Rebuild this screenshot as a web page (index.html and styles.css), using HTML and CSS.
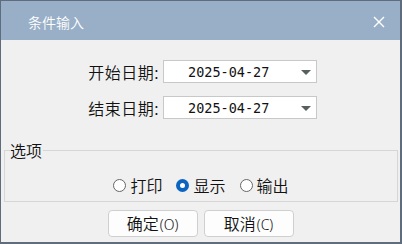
FILE: index.html
```html
<!DOCTYPE html>
<html lang="zh-CN">
<head>
    <meta charset="UTF-8">
    <title>条件输入</title>
    <link rel="stylesheet" href="styles.css">
</head>
<body>
<div class="dialog">
    <div class="titlebar">
        <span class="title">条件输入</span>
        <svg class="close" width="12" height="12" viewBox="0 0 12 12">
            <path d="M1 1 L11 11 M11 1 L1 11" stroke="#fff" stroke-width="1.4" fill="none"/>
        </svg>
    </div>
    <div class="content">
        <div class="dates">
            <label>开始日期:</label>
            <div class="datebox"><span>2025-04-27</span><i class="arrow"></i></div>
            <label>结束日期:</label>
            <div class="datebox"><span>2025-04-27</span><i class="arrow"></i></div>
        </div>
        <fieldset class="options">
            <legend>选项</legend>
            <div class="radios">
                <span class="radio"></span><span class="rlabel">打印</span>
                <span class="radio checked"></span><span class="rlabel">显示</span>
                <span class="radio"></span><span class="rlabel">输出</span>
            </div>
        </fieldset>
        <div class="actions">
            <button>确定<span class="key">(O)</span></button>
            <button>取消<span class="key">(C)</span></button>
        </div>
    </div>
</div>
</body>
</html>
```

FILE: styles.css
```css
* {
    margin: 0;
    padding: 0;
    box-sizing: border-box;
}

body {
    font-family: "Noto Sans CJK SC", "Noto Sans", sans-serif;
    font-weight: 350;
    background: #f0f0f0;
}

.dialog {
    width: 402px;
    height: 244px;
    border: 1px solid #5e6c7b;
    border-right-width: 2px;
    border-bottom-width: 2px;
    background: #f0f0f0;
    display: flex;
    flex-direction: column;
}

.titlebar {
    height: 39px;
    background: #99afc7;
    display: flex;
    align-items: center;
    justify-content: space-between;
    padding: 0 15px 0 27px;
}

.titlebar .title {
    color: #fff;
    font-size: 14px;
    line-height: 16px;
    margin-top: 2px;
}

.titlebar .close {
    margin-top: 3px;
}

.content {
    flex: 1;
    padding: 20px 2px 0 3px;
}

.dates {
    display: grid;
    grid-template-columns: 155px 154px;
    column-gap: 4px;
    row-gap: 13px;
    align-items: center;
}

.dates label {
    text-align: right;
    font-size: 16px;
    line-height: 20px;
    letter-spacing: 0.5px;
    color: #111;
}

.datebox {
    height: 23px;
    background: #fff;
    border: 1px solid #c8c8c8;
    display: flex;
    align-items: center;
    justify-content: space-between;
    padding: 0 5px 0 24px;
}

.datebox span {
    font-family: "DejaVu Sans Mono", monospace;
    font-weight: 400;
    font-size: 13.5px;
    color: #111;
    line-height: 16px;
}

.arrow {
    width: 0;
    height: 0;
    border-left: 5px solid transparent;
    border-right: 5px solid transparent;
    border-top: 5px solid #56605c;
    margin-top: 1px;
}

.options {
    margin-top: 21px;
    border: 1px solid #d6d6d6;
    padding: 0;
    height: 62px;
}

.options legend {
    margin-left: 5px;
    padding: 0 1px 0 0;
    font-size: 16px;
    line-height: 20px;
    color: #111;
}

.radios {
    display: flex;
    align-items: center;
    justify-content: center;
    padding: 10px 0 0 0;
    height: 40px;
}

.radio {
    width: 13px;
    height: 13px;
    border-radius: 50%;
    border: 1px solid #666;
    background: #fff;
    margin-right: 4px;
}

.radio.checked {
    border: 4px solid #0a64c0;
    background: #fff;
}

.rlabel {
    font-size: 16px;
    line-height: 20px;
    color: #111;
    margin-right: 14px;
}

.rlabel:last-child {
    margin-right: 0;
}

.actions {
    display: flex;
    justify-content: center;
    gap: 6px;
    margin-top: 8px;
    padding-right: 1px;
}

.actions button {
    width: 90px;
    height: 27px;
    background: #fdfdfd;
    border: 1px solid #cfcfcf;
    border-radius: 4px;
    font-family: "Noto Sans CJK SC", "Noto Sans", sans-serif;
    font-weight: 350;
    font-size: 16px;
    line-height: 20px;
    color: #111;
}

.actions .key {
    font-family: "Noto Sans", sans-serif;
    font-weight: 300;
    font-size: 14px;
    margin-left: 1px;
}
```
